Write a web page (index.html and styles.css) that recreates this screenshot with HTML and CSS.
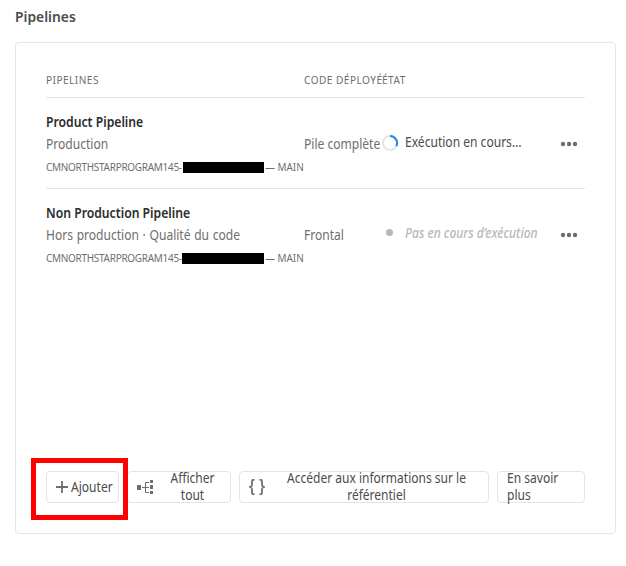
FILE: index.html
```html
<!DOCTYPE html>
<html lang="fr">
<head>
<meta charset="utf-8">
<title>Pipelines</title>
<link rel="stylesheet" href="styles.css">
</head>
<body>
<h2 class="title"><span class="t">Pipelines</span></h2>
<section class="card">
  <div class="row head">
    <div><span class="t">PIPELINES</span></div>
    <div><span class="t">CODE DÉPLOYÉ</span></div>
    <div><span class="t">ÉTAT</span></div>
  </div>
  <div class="row item">
    <div class="info">
      <div class="name"><span class="t">Product Pipeline</span></div>
      <div class="kind"><span class="t">Production</span></div>
      <div class="repo"><span class="t prog">CMNORTHSTARPROGRAM145-</span><span class="mask"></span><span class="t branch">— MAIN</span></div>
    </div>
    <div class="code"><span class="t">Pile complète</span></div>
    <div class="state">
      <svg class="spinner" viewBox="0 0 16 16"><circle cx="8" cy="8" r="7" fill="none" stroke="#e6e6e6" stroke-width="2"/><path d="M8 1A7 7 0 0 1 14.200 11.300" fill="none" stroke="#2f86ea" stroke-width="2"/></svg>
      <span class="t running">Exécution en cours…</span>
    </div>
    <svg class="more" viewBox="0 0 18 6"><circle cx="3" cy="3" r="2.200"/><circle cx="9" cy="3" r="2.200"/><circle cx="15" cy="3" r="2.200"/></svg>
  </div>
  <div class="row item last">
    <div class="info">
      <div class="name"><span class="t">Non Production Pipeline</span></div>
      <div class="kind"><span class="t spaced">Hors production · Qualité du code</span></div>
      <div class="repo"><span class="t prog">CMNORTHSTARPROGRAM145-</span><span class="mask wide"></span><span class="t branch">— MAIN</span></div>
    </div>
    <div class="code"><span class="t">Frontal</span></div>
    <div class="state">
      <span class="dot"></span>
      <span class="t idle">Pas en cours d’exécution</span>
    </div>
    <svg class="more" viewBox="0 0 18 6"><circle cx="3" cy="3" r="2.200"/><circle cx="9" cy="3" r="2.200"/><circle cx="15" cy="3" r="2.200"/></svg>
  </div>
  <footer class="actions">
    <div class="btn add">
      <svg class="plus" viewBox="0 0 12 12"><path d="M6 0v12M0 6h12" stroke="#6e6e6e" stroke-width="1.800"/></svg>
      <span class="t">Ajouter</span>
      <i class="highlight"></i>
    </div>
    <div class="btn all">
      <svg class="tree" viewBox="0 0 18 14"><path d="M0 5h4v5H0zM13 0h3v3h-3zM13 5h3v4h-3zM13 11h3v3h-3z" fill="#6e6e6e"/><path d="M5 7.500h7M12 2.500H8.500v10H12" fill="none" stroke="#6e6e6e"/></svg>
      <span class="label">Afficher<br>tout</span>
    </div>
    <div class="btn git">
      <svg class="braces" viewBox="0 0 16 16"><path d="M5.500 .8H4.600C3.500 .8 3 1.300 3 2.300V5.700C3 7 2.300 7.600 1 8C2.300 8.400 3 9 3 10.300V13.700C3 14.700 3.500 15.200 4.600 15.200H5.500M10.500 .8H11.400C12.500 .8 13 1.300 13 2.300V5.700C13 7 13.700 7.600 15 8C13.700 8.400 13 9 13 10.300V13.700C13 14.700 12.500 15.200 11.400 15.200H10.500" fill="none" stroke="#6e6e6e" stroke-width="1.800"/></svg>
      <span class="label">Accéder aux informations sur le<br>référentiel</span>
    </div>
    <div class="btn learn"><span class="t">En savoir<br>plus</span></div>
  </footer>
</section>
</body>
</html>
```
FILE: styles.css
```css
* { box-sizing: border-box; }
body {
  margin: 0;
  padding: 0 10px 0 15px;
  background: #fff;
  color: #6e6e6e;
  font: 13.5px/17px "Noto Sans", "Open Sans", sans-serif;
  white-space: nowrap;
}
.t { display: inline-block; transform: scaleX(.893); transform-origin: 0 50%; }
.title {
  margin: 0;
  height: 42px;
  padding-top: 6px;
  color: #4b4b4b;
  font-size: 15px;
  line-height: 20px;
  font-weight: 600;
}
.title .t { transform: scaleX(.923); }
.card {
  display: flex;
  flex-direction: column;
  width: 601px;
  height: 492px;
  padding: 30px;
  border: 1px solid #e4e4e4;
  border-radius: 4px;
}
.row {
  display: grid;
  grid-template-columns: 258px 78px 177px 26px;
  border-bottom: 1px solid #e4e4e4;
}
.head {
  height: 25px;
  font-size: 11px;
  line-height: 13px;
  letter-spacing: .5px;
}
.head .t { transform: scaleX(.918); }
.item { height: 91px; padding-top: 16px; }
.last { border-bottom: 0; }
.name { height: 22px; color: #2c2c2c; font-weight: 600; }
.name .t { transform: scaleX(.903); }
.kind { height: 25px; }
.spaced { word-spacing: .6px; }
.repo { display: flex; height: 12px; font-size: 11px; line-height: 12px; }
.prog { flex: none; width: 137px; letter-spacing: -.3px; }
.repo .prog { transform: scaleX(.905); }
.mask { position: relative; z-index: 1; flex: none; width: 81px; height: 11px; margin-top: 1px; background: #000; }
.wide { width: 82px; margin-left: -1px; }
.branch { flex: none; margin-left: 1px; }
.repo .branch { transform: scaleX(.9); }
.code { padding-top: 22px; }
.state { display: flex; align-items: flex-start; padding-top: 20px; }
.spinner { flex: none; width: 16px; height: 16px; margin-right: 7px; margin-top: 1px; }
.running { color: #4b4b4b; }
.dot { flex: none; width: 7px; height: 7px; margin: 4px 12px 0 4px; border-radius: 50%; background: #b8b8b8; }
.idle { color: #b8b8b8; font-style: italic; font-weight: 500; }
.more { width: 18px; height: 6px; margin: 27px 0 0 1px; fill: #6e6e6e; }
.actions { display: flex; gap: 8px; margin-top: auto; color: #4b4b4b; }
.btn {
  position: relative;
  display: flex;
  align-items: center;
  height: 32px;
  border: 1px solid #e4e4e4;
  border-radius: 4px;
}
.label { flex: 1; text-align: center; transform: scaleX(.89); }
.add { width: 73px; padding-left: 9px; }
.plus { flex: none; width: 12px; height: 12px; margin-right: 3px; }
.highlight { position: absolute; z-index: 2; left: -16px; top: -14px; width: 97px; height: 62px; border: 5px solid #f00; }
.all { width: 104px; padding-left: 9px; }
.tree { flex: none; width: 18px; height: 14px; }
.git { width: 250px; padding-left: 9px; }
.braces { flex: none; width: 16px; height: 16px; }
.learn { width: 88px; padding-left: 9px; }
```
